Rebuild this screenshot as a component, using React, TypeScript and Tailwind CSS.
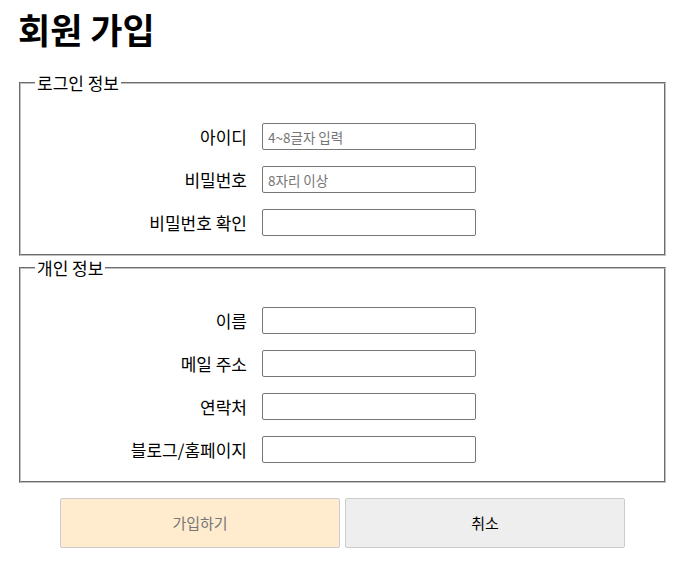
import React from 'react'

const font = { fontFamily: '"Malgun Gothic", "Noto Sans CJK KR", sans-serif' }

type Field = { label: string; placeholder?: string; type?: string }

const loginFields: Field[] = [
  { label: '아이디', placeholder: '4~8글자 입력' },
  { label: '비밀번호', placeholder: '8자리 이상', type: 'password' },
  { label: '비밀번호 확인', type: 'password' },
]

const personalFields: Field[] = [
  { label: '이름' },
  { label: '메일 주소', type: 'email' },
  { label: '연락처', type: 'tel' },
  { label: '블로그/홈페이지', type: 'url' },
]

function Row({ field }: { field: Field }) {
  return (
    <div className="flex items-center h-[27px]">
      <label className="w-[226px] text-right text-[17px] leading-[27px] text-black">
        {field.label}
      </label>
      <input
        type={field.type ?? 'text'}
        placeholder={field.placeholder}
        className="ml-[15px] w-[214px] h-[27px] rounded-[2px] border border-[#767676] bg-white px-[5px] text-[13.5px] text-black placeholder:text-[#757575] outline-none"
      />
    </div>
  )
}

function Section({ title, fields, pad }: { title: string; fields: Field[]; pad: string }) {
  return (
    <fieldset className={`w-[647px] border-2 [border-style:groove] border-[#c0c0c0] ${pad}`}>
      <legend className="ml-[14px] px-[2px] text-[17px] leading-[18px] text-black">{title}</legend>
      <div className="flex flex-col gap-[16px]">
        {fields.map((f) => (
          <Row key={f.label} field={f} />
        ))}
      </div>
    </fieldset>
  )
}

export default function App() {
  return (
    <div className="w-[680px] h-[569px] bg-white text-black" style={font}>
      <h1 className="pl-[18px] pt-[8px] text-[35px] font-bold leading-[42px]">회원 가입</h1>
      <form className="ml-[19px] mt-[24px]">
        <Section title="로그인 정보" fields={loginFields} pad="pt-[31px] pb-[18px]" />
        <div className="mt-[3px]">
          <Section title="개인 정보" fields={personalFields} pad="pt-[30px] pb-[18px]" />
        </div>
        <div className="flex justify-center gap-[5px] mt-[15px] w-[647px]">
          <button
            type="submit"
            className="w-[280px] h-[50px] rounded-[2px] border border-[#cccccc] bg-[#ffebcd] text-[15px] text-[#777777]"
          >
            가입하기
          </button>
          <button
            type="reset"
            className="w-[280px] h-[50px] rounded-[2px] border border-[#cccccc] bg-[#eeeeee] text-[15px] text-black"
          >
            취소
          </button>
        </div>
      </form>
    </div>
  )
}
